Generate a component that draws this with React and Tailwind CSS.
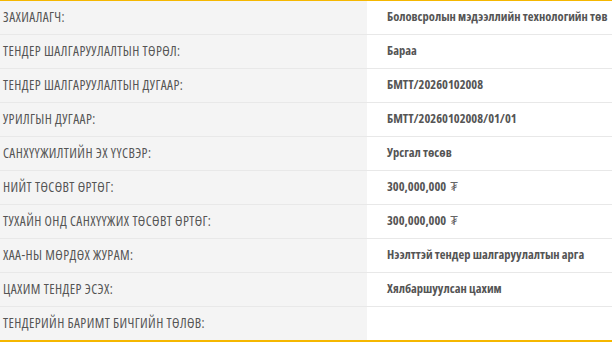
const rows = [
  { label: 'ЗАХИАЛАГЧ:', value: 'Боловсролын мэдээллийн технологийн төв' },
  { label: 'ТЕНДЕР ШАЛГАРУУЛАЛТЫН ТӨРӨЛ:', value: 'Бараа' },
  { label: 'ТЕНДЕР ШАЛГАРУУЛАЛТЫН ДУГААР:', value: 'БМТТ/20260102008' },
  { label: 'УРИЛГЫН ДУГААР:', value: 'БМТТ/20260102008/01/01' },
  { label: 'САНХҮҮЖИЛТИЙН ЭХ ҮҮСВЭР:', value: 'Урсгал төсөв' },
  { label: 'НИЙТ ТӨСӨВТ ӨРТӨГ:', value: '300,000,000', money: true },
  { label: 'ТУХАЙН ОНД САНХҮҮЖИХ ТӨСӨВТ ӨРТӨГ:', value: '300,000,000', money: true },
  { label: 'ХАА-НЫ МӨРДӨХ ЖУРАМ:', value: 'Нээлттэй тендер шалгаруулалтын арга' },
  { label: 'ЦАХИМ ТЕНДЕР ЭСЭХ:', value: 'Хялбаршуулсан цахим' },
  { label: 'ТЕНДЕРИЙН БАРИМТ БИЧГИЙН ТӨЛӨВ:', value: '' },
];

export default function App() {
  return (
    <div className="w-[612px] h-[342px] bg-white overflow-hidden font-['Open_Sans',sans-serif]">
      <div className="border-t border-b-2 border-[#f5b700]">
        {rows.map((r, i) => (
          <div
            key={i}
            className={`flex h-[33px] ${i < rows.length - 1 ? 'h-[34px] border-b border-[#e8e8e8]' : ''}`}
          >
            <div className="w-[367px] shrink-0 bg-[#f4f4f4] pl-[3px] flex items-center text-[13.5px] font-stretch-[75%] tracking-[0.4px] text-[#555] whitespace-nowrap">
              {r.label}
            </div>
            <div className="flex-1 pl-[20px] flex items-center text-[12.5px] font-bold font-stretch-[75%] text-[#555] whitespace-nowrap">
              {r.value}
              {r.money && <span className="ml-[4px] font-normal text-[#666]">₮</span>}
            </div>
          </div>
        ))}
      </div>
    </div>
  );
}
